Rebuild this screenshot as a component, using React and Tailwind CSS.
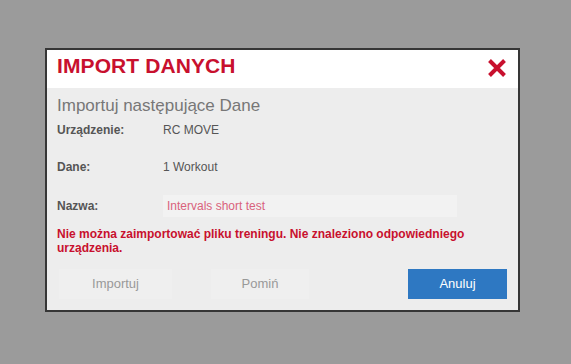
import React from "react";

const Row = ({ label, children, className = "" }) => (
  <div className={`flex items-center ${className}`}>
    <div className="w-[106px] shrink-0 text-[12px] leading-[14px] font-bold text-[#555]">
      {label}
    </div>
    {children}
  </div>
);

const App = () => {
  return (
    <div
      className="w-[571px] h-[364px] bg-[#9b9b9b] pl-[45px] pt-[48px]"
      style={{ fontFamily: '"Liberation Sans", Arial, sans-serif' }}
    >
      <div className="w-[475px] h-[264px] border-2 border-[#363636] bg-[#ededed] flex flex-col">
        {/* header */}
        <div className="h-[38px] bg-white flex items-start justify-between pl-[10px] pr-[11px]">
          <h1 className="pt-[4px] text-[21px] leading-[24px] font-bold text-[#c8102e] tracking-[0.1px]">
            IMPORT DANYCH
          </h1>
          <svg width="20" height="18" viewBox="0 0 20 18" className="mt-[9px]">
            <path d="M2.5 1.5 L17.5 16.5 M17.5 1.5 L2.5 16.5" stroke="#c8102e" strokeWidth="4" />
          </svg>
        </div>

        {/* body */}
        <div className="flex-1 flex flex-col pl-[10px] pr-[11px] pt-[8px] pb-[11px]">
          <h2 className="text-[17px] leading-[20px] text-[#777]">Importuj następujące Dane</h2>

          <Row label="Urządzenie:" className="mt-[7px]">
            <span className="text-[12px] leading-[14px] text-[#555]">RC MOVE</span>
          </Row>
          <Row label="Dane:" className="mt-[23px]">
            <span className="text-[12px] leading-[14px] text-[#555]">1 Workout</span>
          </Row>
          <Row label="Nazwa:" className="mt-[21px]">
            <div className="w-[294px] h-[22px] bg-[#f2f2f2] pl-[4px] flex items-center text-[12px] text-[#d9627c]">
              Intervals short test
            </div>
          </Row>

          <p className="mt-[10px] text-[12px] leading-[14px] font-bold text-[#c8102e]">
            Nie można zaimportować pliku treningu. Nie znaleziono odpowiedniego urządzenia.
          </p>

          <div className="mt-auto flex items-center">
            <button className="ml-[2px] w-[113px] h-[30px] bg-[#efefef] text-[13px] text-[#999]">
              Importuj
            </button>
            <button className="ml-[39px] w-[98px] h-[30px] bg-[#efefef] text-[13px] text-[#999]">
              Pomiń
            </button>
            <button className="ml-auto w-[99px] h-[30px] bg-[#2e78c2] text-[13px] text-white">
              Anuluj
            </button>
          </div>
        </div>
      </div>
    </div>
  );
};

export default App;
